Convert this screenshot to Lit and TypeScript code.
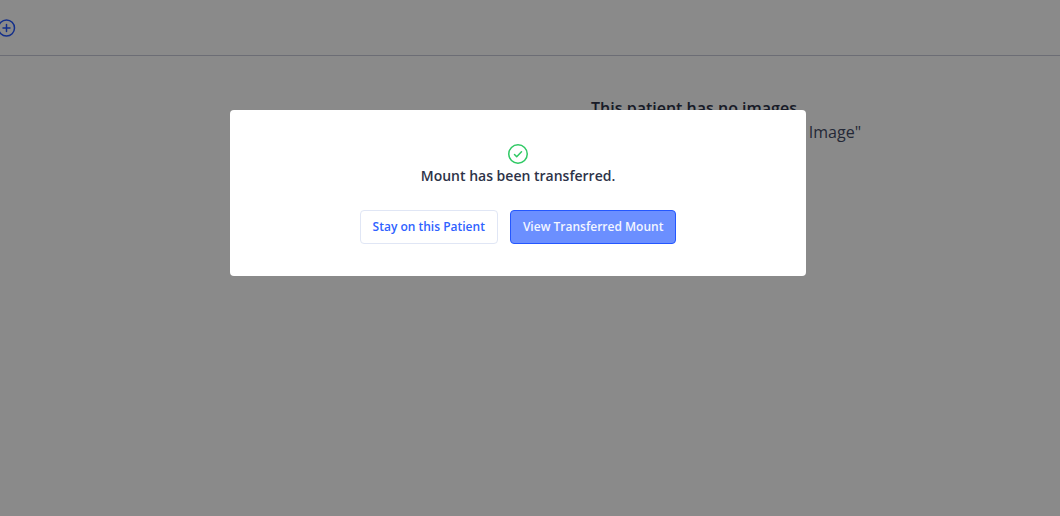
import { LitElement, html, css } from "lit";
import { customElement } from "lit/decorators.js";

@customElement("app-root")
export class AppRoot extends LitElement {
  static styles = css`
    :host {
      display: block;
      min-height: 100vh;
      background: #ffffff;
      color: #2d3348;
      font-family: "Open Sans", "Noto Sans", sans-serif;
    }
    * {
      box-sizing: border-box;
    }
    .toolbar {
      display: flex;
      align-items: center;
      height: 56px;
      border-bottom: 1px solid #c8cad8;
    }
    .add {
      display: flex;
      margin: 0 0 0 -5px;
      padding: 0;
      border: 0;
      background: none;
      color: #2457ff;
    }
    .empty {
      display: flex;
      flex-direction: column;
      align-items: center;
      padding: 40px 0 0 328px;
    }
    .empty-title,
    .empty-hint {
      margin: 0;
      font-size: 16px;
      line-height: 24px;
    }
    .empty-title {
      font-weight: 600;
    }
    .empty-hint {
      width: 334px;
      color: #434b66;
      text-align: right;
    }
    .overlay {
      position: fixed;
      inset: 0;
      display: flex;
      align-items: flex-start;
      justify-content: center;
      padding: 110px 24px 0 0;
      background: rgba(0, 0, 0, 0.46);
    }
    .dialog {
      display: flex;
      flex-direction: column;
      align-items: center;
      width: 100%;
      max-width: 576px;
      padding: 32px;
      border-radius: 4px;
      background: #ffffff;
    }
    .message {
      margin: 0 0 24px;
      font-size: 14px;
      font-weight: 600;
      line-height: 20px;
    }
    .actions {
      display: flex;
      gap: 12px;
    }
    .button {
      height: 34px;
      padding: 0 12px;
      border: 1px solid #e0e6f5;
      border-radius: 4px;
      background: #ffffff;
      color: #2f62ff;
      font-family: inherit;
      font-size: 12px;
      font-weight: 600;
      line-height: 16px;
    }
    .primary {
      border-color: #2457ff;
      background: #6b8fff;
      color: #f3f6ff;
    }
    svg {
      display: block;
      fill: none;
      stroke: currentColor;
      stroke-width: 1.5;
      stroke-linecap: round;
      stroke-linejoin: round;
    }
    .check {
      color: #2fc964;
    }
  `;

  render() {
    return html`
      <header class="toolbar">
        <button class="add" aria-label="Add">
          <svg width="24" height="24" viewBox="0 0 24 24">
            <circle cx="11.5" cy="12" r="8" />
            <path d="M11.5 8.5v7M8 12h7" />
          </svg>
        </button>
      </header>
      <main class="empty">
        <h1 class="empty-title">This patient has no images</h1>
        <p class="empty-hint">Image"</p>
      </main>
      <div class="overlay">
        <section class="dialog" role="dialog" aria-modal="true" aria-labelledby="message">
          <svg class="check" width="24" height="24" viewBox="0 0 24 24">
            <circle cx="12" cy="12" r="9.25" />
            <path d="M8.5 12.5l2.2 2.2 4.8-4.9" />
          </svg>
          <p class="message" id="message">Mount has been transferred.</p>
          <div class="actions">
            <button class="button">Stay on this Patient</button>
            <button class="button primary">View Transferred Mount</button>
          </div>
        </section>
      </div>
    `;
  }
}
